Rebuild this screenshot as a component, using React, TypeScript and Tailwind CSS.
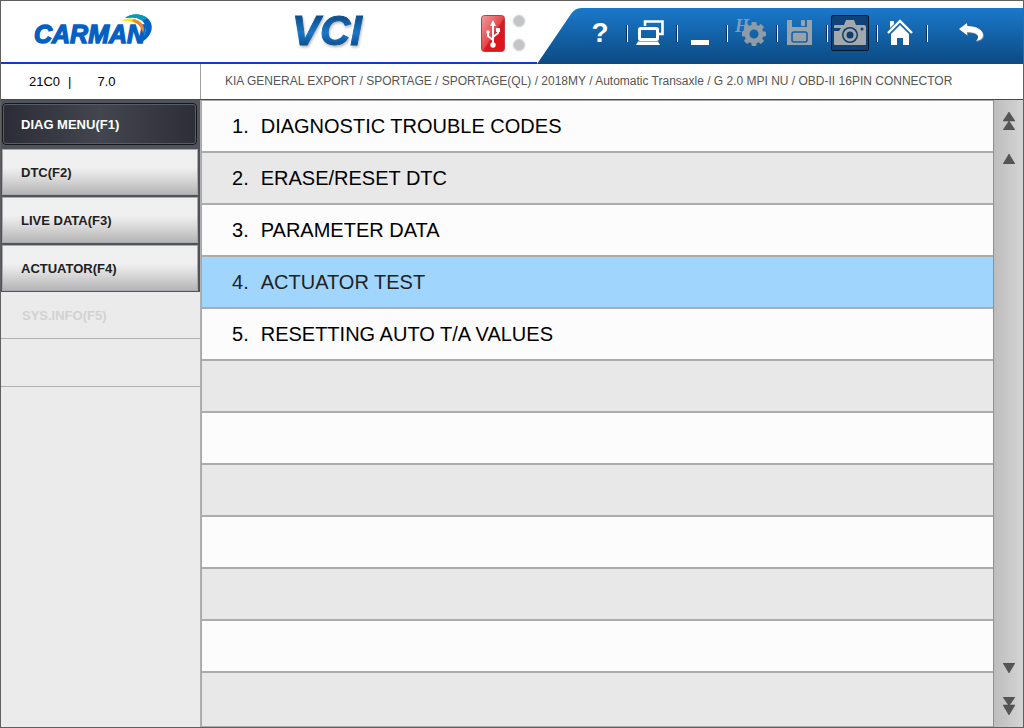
import type { ReactNode } from "react";

// Enabled sidebar entries below the current menu
const menuItems = [
  { label: "DTC(F2)" },
  { label: "LIVE DATA(F3)" },
  { label: "ACTUATOR(F4)" },
];

// Functions offered for the selected system
const functions = [
  "DIAGNOSTIC TROUBLE CODES",
  "ERASE/RESET DTC",
  "PARAMETER DATA",
  "ACTUATOR TEST",
  "RESETTING AUTO T/A VALUES",
];

const rowCount = 12;
const selectedRow = 3;

const vehiclePath =
  "KIA GENERAL EXPORT / SPORTAGE / SPORTAGE(QL) / 2018MY / Automatic Transaxle / G 2.0 MPI NU / OBD-II 16PIN CONNECTOR";

// Brand logo with the coloured swoosh over the last letter
const CarmanLogo = () => (
  <svg width="128" height="40" viewBox="0 0 128 40" role="img" aria-label="CARMAN">
    <text
      x="1"
      y="30"
      fontFamily="Liberation Sans, Arial, sans-serif"
      fontSize="25"
      fontWeight="bold"
      fontStyle="italic"
      fill="#0560c4"
      stroke="#0560c4"
      strokeWidth="1.4"
    >
      CARMAN
    </text>
    <path d="M92 5 C101 -1 114 1 118 10 C121 18 115 27 106 30 C111 24 115 17 111 10 C107 4 99 4 92 5Z" fill="#0560c4" />
    <path d="M92 5 C98 0 108 0 114 5 L110 8 C105 4 99 4 92 5Z" fill="#0999b4" />
    <path d="M88 8 C94 4 102 5 106 9 L103 11 C99 8 94 7 88 8Z" fill="#ffe600" />
    <path d="M101 6 C109 8 113 14 110 20 C108 14 105 10 99 8Z" fill="#e8862d" />
  </svg>
);

// Product name beside the brand logo
const VciLogo = () => (
  <svg width="100" height="50" viewBox="0 0 100 50" role="img" aria-label="VCI">
    <defs>
      <linearGradient id="vci" x1="0" y1="0" x2="0" y2="1">
        <stop offset="0.2" stopColor="#0e4f8d" />
        <stop offset="0.55" stopColor="#1976c6" />
        <stop offset="0.85" stopColor="#0d4c88" />
      </linearGradient>
    </defs>
    <text
      x="3"
      y="36"
      fontFamily="Liberation Sans, Arial, sans-serif"
      fontSize="42"
      fontWeight="bold"
      fontStyle="italic"
      fill="url(#vci)"
      stroke="url(#vci)"
      strokeWidth="1"
      className="drop-shadow-[1px_2px_1px_rgba(0,0,0,0.25)]"
    >
      VCI
    </text>
  </svg>
);

const UsbIcon = () => (
  <svg width="24" height="37" viewBox="0 0 24 37" aria-hidden="true">
    <defs>
      <linearGradient id="usb" x1="0" y1="0" x2="1" y2="1">
        <stop offset="0" stopColor="#f0a0a0" />
        <stop offset="0.5" stopColor="#e5484b" />
        <stop offset="0.55" stopColor="#dc1820" />
        <stop offset="1" stopColor="#e0141c" />
      </linearGradient>
    </defs>
    <rect x="0.5" y="0.5" width="23" height="36" rx="3" fill="url(#usb)" stroke="#c43a3f" />
    <g fill="none" stroke="#fff" strokeWidth="2">
      <path d="M12 30V9" />
      <path d="M12 25L7 21V17" />
      <path d="M12 22L17 18V14" />
    </g>
    <path d="M12 5L15 11H9Z" fill="#fff" />
    <circle cx="12" cy="30" r="2.7" fill="#fff" />
    <circle cx="7" cy="17" r="1.8" fill="#fff" />
    <path d="M15 13h4v4h-4z" fill="#fff" />
  </svg>
);

const MonitorsIcon = () => (
  <svg width="30" height="28" viewBox="0 0 30 28" aria-hidden="true">
    <path d="M10 7V2.5H27.5V15H24" fill="none" stroke="#fff" strokeWidth="2.6" />
    <rect x="4.5" y="9.5" width="18" height="11" rx="1" fill="none" stroke="#fff" strokeWidth="3" />
    <path d="M3 22.5H23L25 26H1Z" fill="#fff" />
  </svg>
);

const MinimizeIcon = () => (
  <svg width="20" height="28" viewBox="0 0 20 28" aria-hidden="true">
    <rect x="1" y="21" width="18" height="5" fill="#fff" />
  </svg>
);

const teeth = [0, 45, 90, 135, 180, 225, 270, 315];

const SettingsIcon = () => (
  <svg width="34" height="36" viewBox="0 0 34 36" aria-hidden="true">
    <text x="2" y="17" fontFamily="Liberation Serif, serif" fontSize="18" fontWeight="bold" fontStyle="italic" fill="#7d9cbb">
      H
    </text>
    <g fill="#8f9ba6">
      {teeth.map((angle) => (
        <rect key={angle} x="18.5" y="7" width="5" height="6" rx="1" transform={`rotate(${angle} 21 19)`} />
      ))}
    </g>
    <circle cx="21" cy="19" r="7" fill="none" stroke="#8f9ba6" strokeWidth="5" />
  </svg>
);

const SaveIcon = () => (
  <svg width="26" height="28" viewBox="0 0 26 28" aria-hidden="true">
    <path d="M0 1H5V8H20V1H25V26H0Z" fill="#98a2ab" />
    <rect x="14" y="1" width="4" height="6" rx="1" fill="#98a2ab" />
    <rect x="5" y="13" width="15" height="10" rx="2" fill="none" stroke="#1461a9" strokeWidth="1.6" />
  </svg>
);

const CameraIcon = () => (
  <svg width="32" height="26" viewBox="0 0 32 26" className="shrink-0" aria-hidden="true">
    <path d="M0 11H5L7 8H0V6Q0 5 1 5H10L12 0H20L22 5H30Q32 5 32 7V24Q32 25 31 25H1Q0 25 0 24Z" fill="#a3a8ac" />
    <circle cx="16" cy="15" r="8" fill="#103e6c" />
    <circle cx="16" cy="15" r="5" fill="none" stroke="#a3a8ac" strokeWidth="3" />
    <circle cx="28" cy="9" r="1.5" fill="#103e6c" />
  </svg>
);

const HomeIcon = () => (
  <svg width="26" height="28" viewBox="0 0 26 28" aria-hidden="true">
    <path d="M3 2H7V5L3 9Z" fill="#fff" />
    <path d="M1 14L13 2L25 14" fill="none" stroke="#fff" strokeWidth="2.4" />
    <path d="M13 6L22 15V26H16V19H10V26H4V15Z" fill="#fff" />
  </svg>
);

const BackIcon = () => (
  <svg width="26" height="20" viewBox="0 0 26 20" aria-hidden="true">
    <path d="M1 7L9 1V4C19 4 25 8 25 13C25 16 22 18 17 19C23 14 19 10 9 10V13Z" fill="#7f8890" />
    <path d="M0 6L8 0V3C18 3 24 7 24 12C24 15 22 17 17 18C22 13 18 9 8 9V12Z" fill="#fff" />
  </svg>
);

type ToolProps = { label: string; active?: boolean; last?: boolean; children: ReactNode };

// One toolbar button, followed by its divider
const Tool = ({ label, active, last, children }: ToolProps) => (
  <div className="flex items-center">
    <button
      type="button"
      aria-label={label}
      className={`flex h-9 w-[38px] items-center justify-center ${
        active ? "rounded-xs border border-[#03152b] bg-[#104277]" : ""
      }`}
    >
      {children}
    </button>
    {!last && <span className="ml-[7px] mr-[3px] h-[17px] border-l border-r border-l-[#08315a] border-r-white" />}
  </div>
);

const Header = () => (
  <header className="flex h-[63px] bg-white">
    <div className="flex min-w-0 flex-1 items-start border-b-2 border-[#0c3fc4]">
      <div className="ml-8 mt-3">
        <CarmanLogo />
      </div>
      <div className="ml-32 mt-2">
        <VciLogo />
      </div>
      <div className="ml-auto mr-3 mt-3.5 flex gap-2">
        <UsbIcon />
        <div className="flex flex-col gap-3">
          <span className="size-3 rounded-full border border-gray-300 bg-[#c4c4c4] ring-1 ring-gray-100" />
          <span className="size-3 rounded-full border border-gray-300 bg-[#c4c4c4] ring-1 ring-gray-100" />
        </div>
      </div>
    </div>
    <div className="mt-[7px] flex w-[486px] shrink-0">
      <svg className="h-full w-11 shrink-0" viewBox="0 0 44 56" preserveAspectRatio="none" aria-hidden="true">
        <defs>
          <linearGradient id="bar" x1="0" y1="0" x2="0" y2="1">
            <stop offset="0" stopColor="#1a79cb" />
            <stop offset="1" stopColor="#0c4a82" />
          </linearGradient>
        </defs>
        <path d="M0 56L34 6Q38 0 44 0V56Z" fill="url(#bar)" />
      </svg>
      <nav className="flex flex-1 items-start bg-linear-to-b from-[#1a79cb] to-[#0c4a82] pt-[7px]">
        <Tool label="Help">
          <span className="text-[28px] font-bold leading-9 text-white">?</span>
        </Tool>
        <Tool label="Connection"><MonitorsIcon /></Tool>
        <Tool label="Minimize"><MinimizeIcon /></Tool>
        <Tool label="Settings"><SettingsIcon /></Tool>
        <Tool label="Save"><SaveIcon /></Tool>
        <Tool label="Capture" active><CameraIcon /></Tool>
        <Tool label="Home"><HomeIcon /></Tool>
        <div className="ml-auto mr-8">
          <Tool label="Back" last><BackIcon /></Tool>
        </div>
      </nav>
    </div>
  </header>
);

const Sidebar = () => (
  <nav className="w-[200px] shrink-0 border-r border-[#b0b0b0] bg-[#ebebeb] text-[13px] font-bold">
    <div className="border-r-2 border-[#50525c] bg-[#50525c] pb-px">
      <div className="px-px pb-1 pt-[3px]">
        <button
          type="button"
          className="block h-[42px] w-full rounded border border-[#17181d] bg-linear-to-r from-[#2b2c35] via-[#44464f] to-[#2d2e37] px-[18px] pt-0.5 text-left text-white outline -outline-offset-2 outline-[#5b5d66]"
        >
          DIAG MENU(F1)
        </button>
      </div>
      <div className="flex flex-col gap-0.5 pl-px">
        {menuItems.map((item) => (
          <button
            key={item.label}
            type="button"
            className="h-[46px] border border-[#a9a9b0] bg-linear-to-b from-[#f0f0f0] from-40% via-[#dedede] via-60% to-[#b5b5b5] px-[18px] pt-0.5 text-left text-[#202020]"
          >
            {item.label}
          </button>
        ))}
      </div>
    </div>
    <button type="button" disabled className="block h-[47px] w-full border-b border-[#b0b0b0] px-[21px] pt-0.5 text-left text-[#d2d2d2]">
      SYS.INFO(F5)
    </button>
    <div className="h-12 border-b border-[#b0b0b0]" />
  </nav>
);

const FunctionList = () => (
  <ol className="flex min-w-0 flex-1 flex-col border-l border-t border-[#a8a8a8]">
    {Array.from({ length: rowCount }, (_, i) => {
      const color = i === selectedRow ? "bg-[#a0d6fd]" : i % 2 ? "bg-[#e8e8e8]" : "bg-[#fcfcfc]";
      return (
        <li key={i} className={`h-[52px] border-b-2 border-[#acacac] last:flex-1 last:border-b ${color}`}>
          {functions[i] && (
            <button
              type="button"
              className={`flex size-full items-center gap-3 pl-[30px] text-left text-xl ${
                i === selectedRow ? "text-[#222]" : "text-black"
              }`}
            >
              <span>{i + 1}.</span>
              <span>{functions[i]}</span>
            </button>
          )}
        </li>
      );
    })}
  </ol>
);

// Arrow button of the list scroller
const ScrollArrow = ({ label, points, height }: { label: string; points: string[]; height: number }) => (
  <button type="button" aria-label={label}>
    <svg width="12" height={height} viewBox={`0 0 12 ${height}`} aria-hidden="true">
      {points.map((p) => (
        <polygon key={p} points={p} fill="#555" stroke="#444" strokeWidth="0.5" />
      ))}
    </svg>
  </button>
);

const Scroller = () => (
  <div className="flex w-[30px] shrink-0 flex-col items-center justify-between border-l border-[#909090] bg-linear-to-r from-[#bdbdbd] to-[#d4d4d4] pb-3 pt-3">
    <div className="flex flex-col items-center gap-6">
      <ScrollArrow label="First page" height={18} points={["6,0 12,9 0,9", "6,9 12,18 0,18"]} />
      <ScrollArrow label="Previous page" height={10} points={["6,0 12,10 0,10"]} />
    </div>
    <div className="flex flex-col items-center gap-6">
      <ScrollArrow label="Next page" height={10} points={["0,0 12,0 6,10"]} />
      <ScrollArrow label="Last page" height={18} points={["0,0 12,0 6,9", "0,8 12,8 6,18"]} />
    </div>
  </div>
);

const App = () => {
  return (
    <div className="flex min-h-screen flex-col border border-[#606060] bg-white font-['Liberation_Sans',Arial,sans-serif]">
      <Header />
      {/* Version and selected vehicle */}
      <div className="flex h-9 shrink-0 border-b border-[#17568c]">
        <div className="flex w-[200px] shrink-0 items-center gap-2 border-r border-[#a0a0a0] pl-7 text-[13px] text-black">
          <span>21C0</span>
          <span>|</span>
          <span className="ml-[18px]">7.0</span>
        </div>
        <p className="truncate pl-6 text-xs leading-[34px] text-[#555]">{vehiclePath}</p>
      </div>
      <main className="flex flex-1">
        <Sidebar />
        <FunctionList />
        <Scroller />
      </main>
    </div>
  );
};

export default App;
